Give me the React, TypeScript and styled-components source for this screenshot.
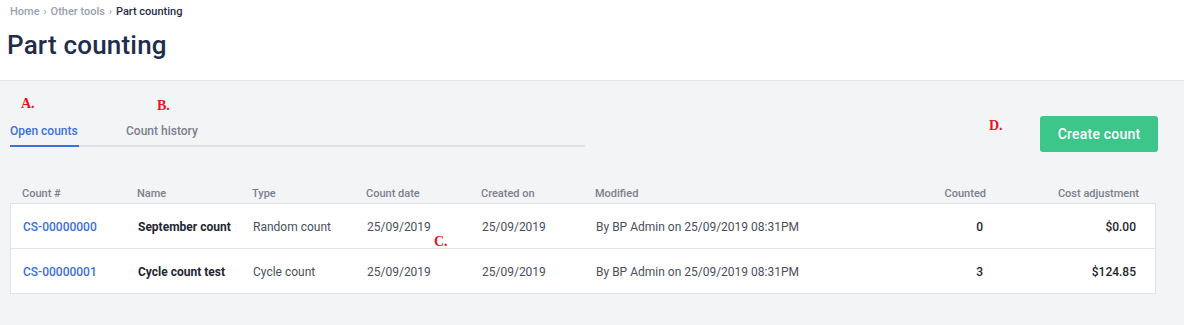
import React from "react";
import styled, { createGlobalStyle } from "styled-components";

const GlobalStyle = createGlobalStyle`
  html, body {
    margin: 0;
    padding: 0;
    background: #f3f4f6;
    font-family: Roboto, "Noto Sans", sans-serif;
  }
`;

interface CountRow {
    id: string,
    name: string,
    type: string,
    countDate: string,
    createdOn: string,
    modified: string,
    counted: number,
    cost: string
}

const rows: CountRow[] = [
    {id: "CS-00000000", name: "September count", type: "Random count", countDate: "25/09/2019", createdOn: "25/09/2019", modified: "By BP Admin on 25/09/2019 08:31PM", counted: 0, cost: "$0.00"},
    {id: "CS-00000001", name: "Cycle count test", type: "Cycle count", countDate: "25/09/2019", createdOn: "25/09/2019", modified: "By BP Admin on 25/09/2019 08:31PM", counted: 3, cost: "$124.85"},
];

const Page = styled.div`
  position: relative;
  width: 1184px;
  min-height: 325px;
`

const Header = styled.header`
  background: #fff;
  height: 81px;
  border-bottom: 1px solid #e1e4e8;
  padding: 5px 0 0 10px;
  box-sizing: border-box;
`

const Breadcrumb = styled.div`
  font-size: 11px;
  line-height: 14px;
  font-weight: 500;
`

const Crumb = styled.span<{ $current?: boolean }>`
  color: ${p => p.$current ? "#1f2d4d" : "#9aa0ad"};
`

const Sep = styled.span`
  margin: 0 4px;
  font-size: 10px;
  color: #9aa0ad;
`

const Title = styled.h1`
  margin: 11px 0 0 -3px;
  font-size: 26px;
  line-height: 30px;
  font-weight: 500;
  color: #1e2d4e;
  letter-spacing: 0.2px;
`

const Content = styled.main`
  padding: 0 26px 0 10px;
`

const Toolbar = styled.div`
  display: flex;
  justify-content: space-between;
  align-items: flex-start;
  padding-top: 35px;
`

const Tabs = styled.div`
  display: flex;
  width: 575px;
  border-bottom: 2px solid #dde1e7;
  gap: 47px;
`

const Tab = styled.div<{ $active?: boolean }>`
  font-size: 12px;
  font-weight: 500;
  line-height: 14px;
  padding: 8px 0 7px;
  margin-bottom: -2px;
  color: ${p => p.$active ? "#3b72d9" : "#7a808e"};
  border-bottom: 2px solid ${p => p.$active ? "#3b72d9" : "transparent"};
  width: ${p => p.$active ? "69px" : "auto"};
`

const CreateButton = styled.button`
  width: 118px;
  height: 36px;
  border: none;
  border-radius: 3px;
  background: #3cc68a;
  color: #fff;
  font-family: inherit;
  font-size: 14px;
  font-weight: 500;
  letter-spacing: 0.2px;
  cursor: pointer;
`

const grid = `
  display: grid;
  grid-template-columns: 115px 115px 114px 115px 114px 1fr 120px 153px;
  padding: 0 19px 0 12px;
  align-items: center;
`

const HeadRow = styled.div`
  ${grid}
  margin-top: 32px;
  height: 19px;
  font-size: 11px;
  font-weight: 500;
  color: #7a808e;
`

const Table = styled.div`
  background: #fff;
  border: 1px solid #dfe2e7;
  width: 1144px;
`

const Row = styled.div`
  ${grid}
  box-sizing: border-box;
  height: 44px;
  padding-top: 1px;
  font-size: 12px;
  color: #4a4f5c;
  & + & {
    height: 45px;
    border-top: 1px solid #dfe2e7;
  }
`

const Cell = styled.div<{ $right?: boolean }>`
  text-align: ${p => p.$right ? "right" : "left"};
  white-space: nowrap;
`

const IdLink = styled.a`
  color: #3a6fd8;
  font-weight: 500;
  text-decoration: none;
`

const NameCell = styled(Cell)`
  color: #1f2533;
  font-weight: 700;
`

const NumCell = styled(Cell)`
  color: #1f2533;
  font-weight: 500;
`

const Note = styled.span<{ $x: number, $y: number }>`
  position: absolute;
  left: ${p => p.$x}px;
  top: ${p => p.$y}px;
  color: #e8141c;
  font-family: "Liberation Serif", serif;
  font-weight: 700;
  font-size: 14px;
  line-height: 14px;
`

const App: React.FC = () => {
    return (
        <Page>
            <GlobalStyle/>
            <Header>
                <Breadcrumb>
                    <Crumb>Home</Crumb><Sep>›</Sep><Crumb>Other tools</Crumb><Sep>›</Sep><Crumb $current>Part counting</Crumb>
                </Breadcrumb>
                <Title>Part counting</Title>
            </Header>
            <Content>
                <Toolbar>
                    <Tabs>
                        <Tab $active>Open counts</Tab>
                        <Tab>Count history</Tab>
                    </Tabs>
                    <CreateButton>Create count</CreateButton>
                </Toolbar>
                <HeadRow>
                    <Cell>Count #</Cell>
                    <Cell>Name</Cell>
                    <Cell>Type</Cell>
                    <Cell>Count date</Cell>
                    <Cell>Created on</Cell>
                    <Cell>Modified</Cell>
                    <Cell $right>Counted</Cell>
                    <Cell $right>Cost adjustment</Cell>
                </HeadRow>
                <Table>
                    {rows.map(r => (
                        <Row key={r.id}>
                            <Cell><IdLink href="#">{r.id}</IdLink></Cell>
                            <NameCell>{r.name}</NameCell>
                            <Cell>{r.type}</Cell>
                            <Cell>{r.countDate}</Cell>
                            <Cell>{r.createdOn}</Cell>
                            <Cell>{r.modified}</Cell>
                            <NumCell $right>{r.counted}</NumCell>
                            <NumCell $right>{r.cost}</NumCell>
                        </Row>
                    ))}
                </Table>
            </Content>
            <Note $x={21} $y={97}>A.</Note>
            <Note $x={157} $y={99}>B.</Note>
            <Note $x={434} $y={235}>C.</Note>
            <Note $x={989} $y={119}>D.</Note>
        </Page>
    )
};

export default App;
